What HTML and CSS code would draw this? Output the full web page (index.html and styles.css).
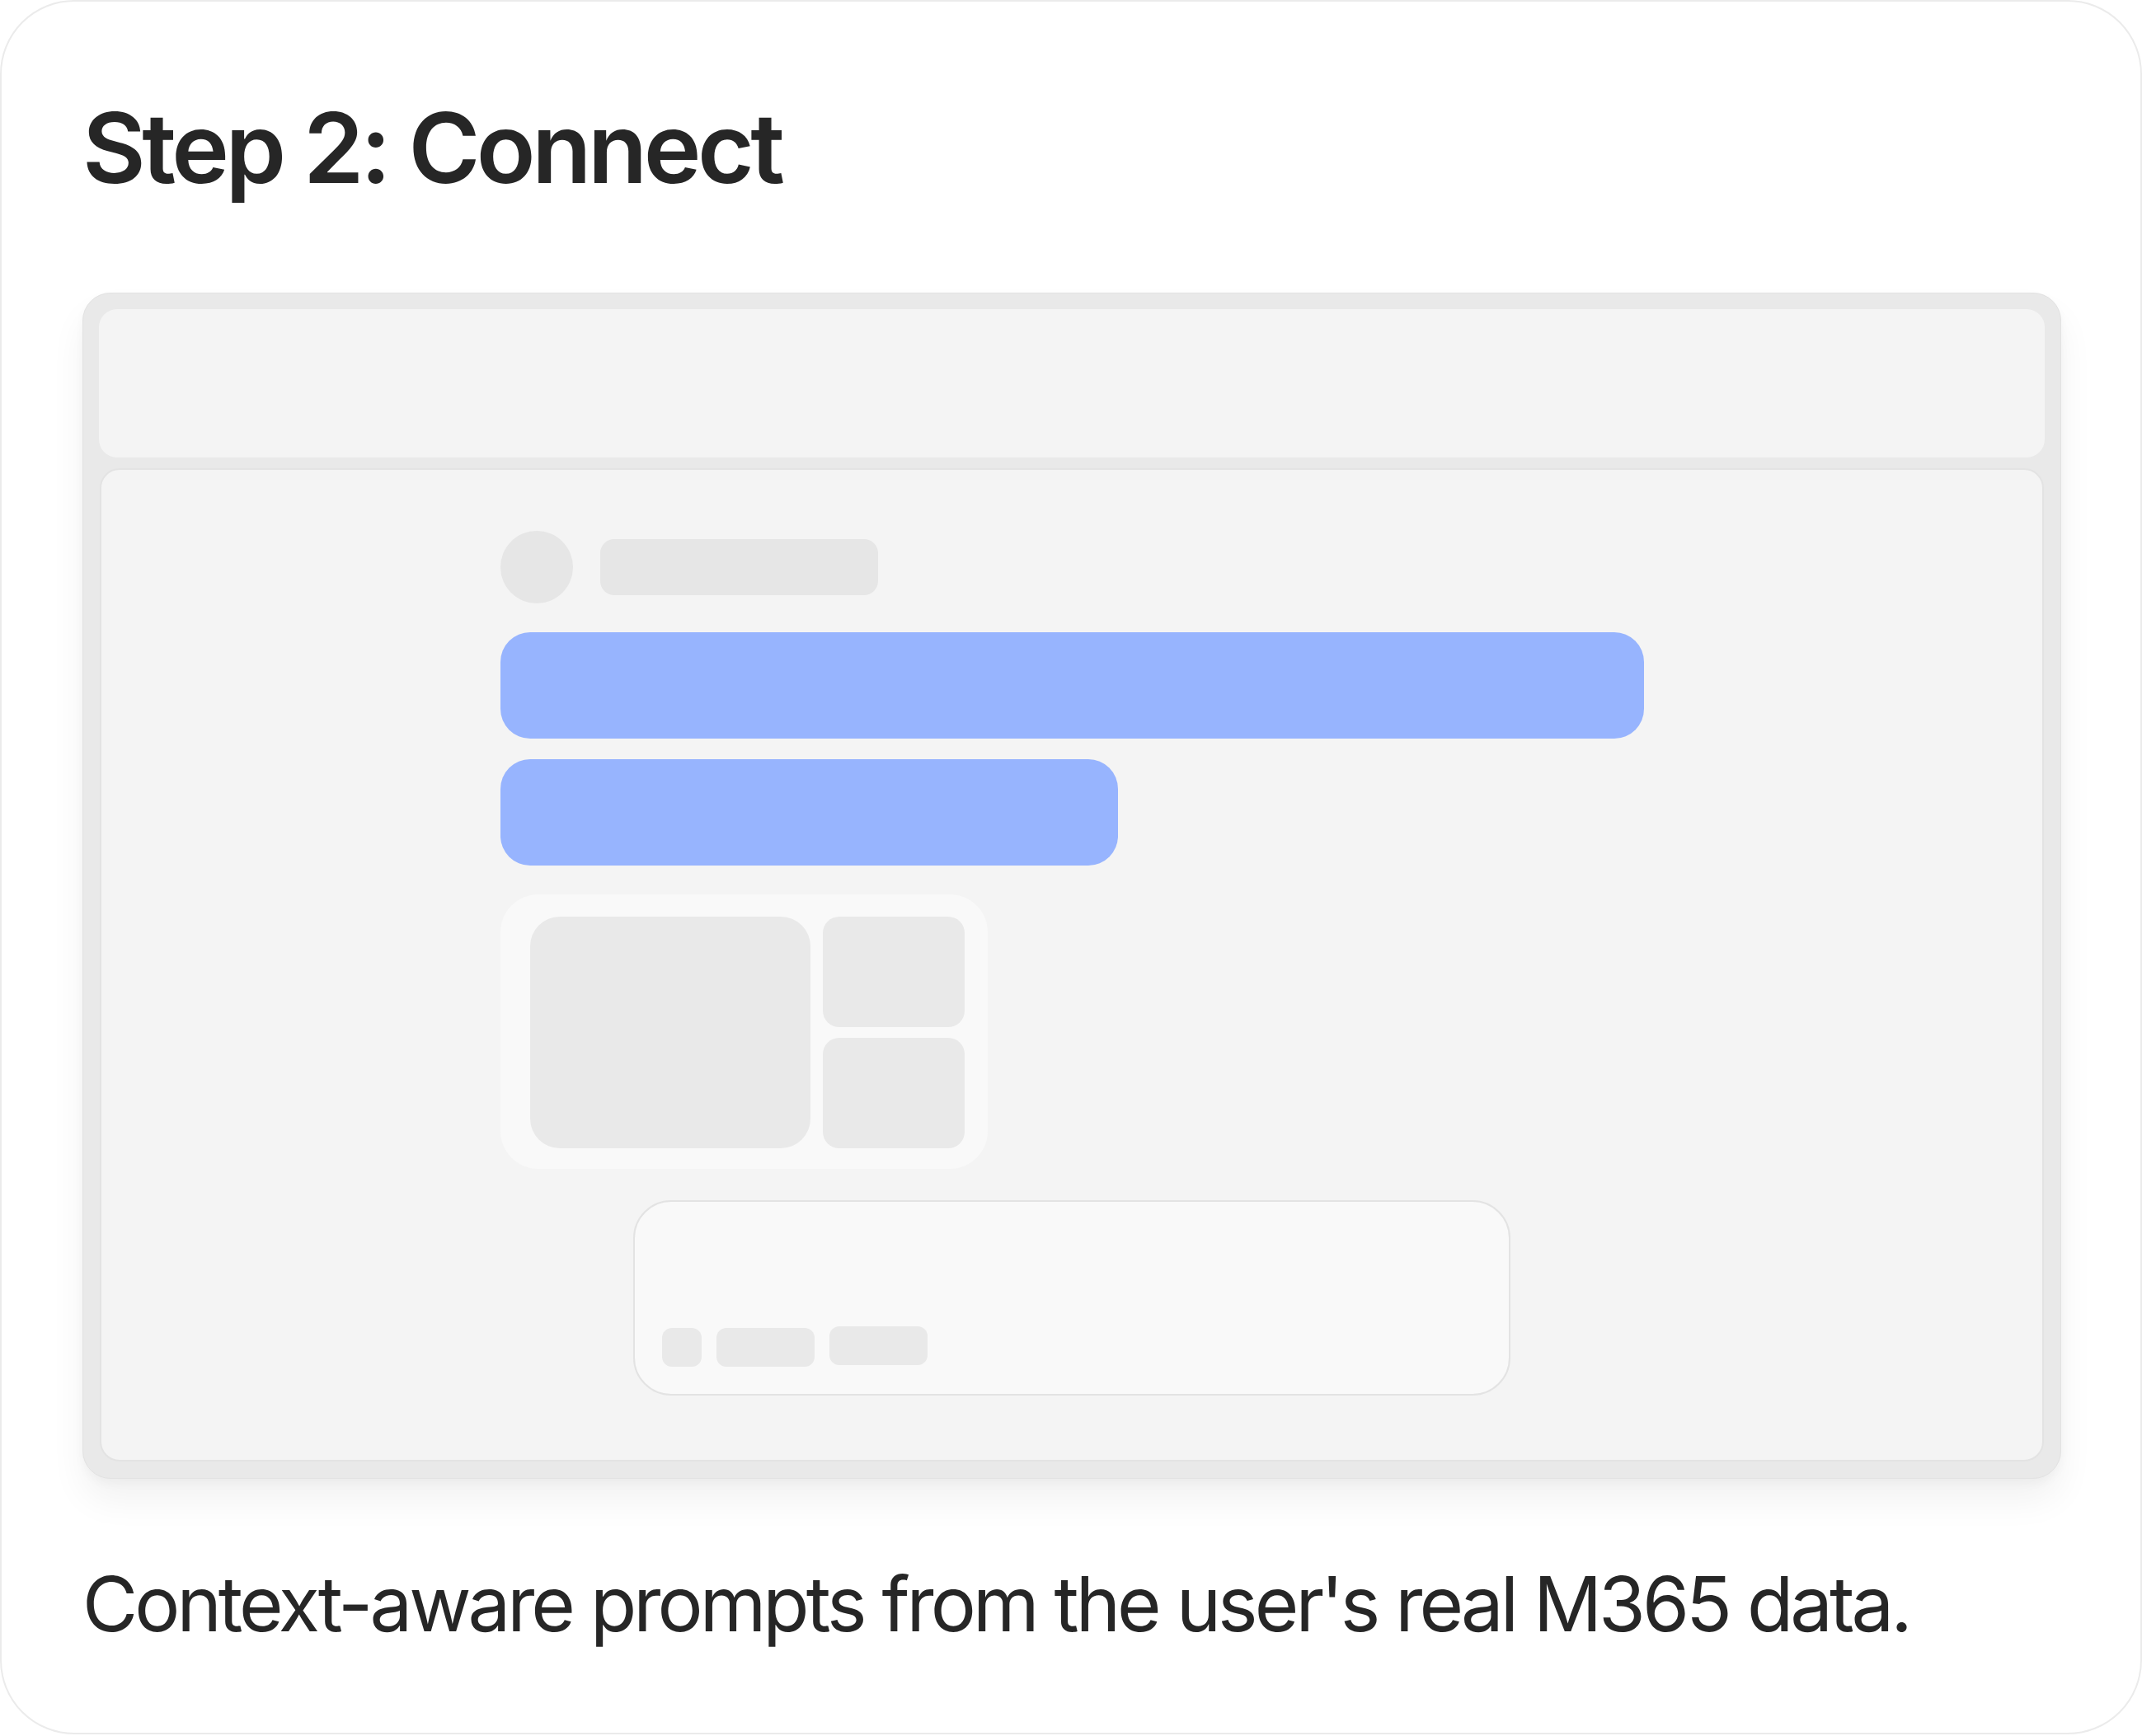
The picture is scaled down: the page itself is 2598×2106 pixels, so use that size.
FILE: index.html
```html
<!DOCTYPE html>
<html lang="en">
<head>
<meta charset="utf-8">
<title>Step 2: Connect</title>
<link rel="stylesheet" href="styles.css">
</head>
<body>
<div class="card">
  <h1 class="title">Step 2: Connect</h1>
  <div class="window">
    <div class="topbar"></div>
    <div class="main">
      <div class="chat">
        <div class="sender">
          <div class="avatar"></div>
          <div class="name"></div>
        </div>
        <div class="bubble bubble-long"></div>
        <div class="bubble bubble-short"></div>
        <div class="gallery">
          <div class="tile tile-big"></div>
          <div class="tile-col">
            <div class="tile tile-small"></div>
            <div class="tile tile-small"></div>
          </div>
        </div>
      </div>
      <div class="composer">
        <div class="chips">
          <div class="chip chip-icon"></div>
          <div class="chip chip-wide"></div>
          <div class="chip chip-wide chip-raised"></div>
        </div>
      </div>
    </div>
  </div>
  <p class="caption">Context-aware prompts from the user's real M365 data.</p>
</div>
</body>
</html>
```

FILE: styles.css
```css
html, body {
  margin: 0;
  padding: 0;
  background: #ffffff;
}

.card {
  box-sizing: border-box;
  width: 2598px;
  height: 2104px;
  border: 2px solid #ebebeb;
  border-radius: 90px;
  background: #ffffff;
  padding: 107px 98px 0 98px;
  font-family: Inter, "Noto Sans", "Liberation Sans", sans-serif;
  color: #262626;
}

.title {
  margin: 0;
  font-size: 118px;
  line-height: 1.2;
  font-weight: 600;
  letter-spacing: -0.038em;
}

.window {
  box-sizing: border-box;
  margin-top: 104px;
  width: 2400px;
  height: 1439px;
  padding: 19px 19px 20px 19px;
  background: #e9e9e9;
  border: 1px solid #e2e2e2;
  border-radius: 34px;
  box-shadow: 0 26px 44px rgba(0, 0, 0, 0.055), 0 6px 12px rgba(0, 0, 0, 0.03);
  display: flex;
  flex-direction: column;
  gap: 13px;
}

.topbar {
  height: 180px;
  background: #f4f4f4;
  border-radius: 22px;
}

.main {
  box-sizing: border-box;
  flex: 1;
  margin: 0 1px;
  background: #f4f4f4;
  border: 2px solid #e3e3e3;
  border-radius: 24px;
  padding-top: 74px;
  display: flex;
  flex-direction: column;
  align-items: center;
}

.chat {
  width: 1387px;
  display: flex;
  flex-direction: column;
  align-items: flex-start;
}

.sender {
  display: flex;
  align-items: center;
  gap: 33px;
}

.avatar {
  width: 88px;
  height: 88px;
  border-radius: 50%;
  background: #e6e6e6;
}

.name {
  width: 337px;
  height: 68px;
  border-radius: 17px;
  background: #e6e6e6;
}

.bubble {
  height: 129px;
  border-radius: 36px;
  background: #97b4fe;
}

.bubble-long {
  width: 1387px;
  margin-top: 35px;
}

.bubble-short {
  width: 749px;
  margin-top: 25px;
}

.gallery {
  box-sizing: border-box;
  margin-top: 35px;
  width: 591px;
  height: 333px;
  padding: 27px 28px 25px 36px;
  background: #f9f9f9;
  border-radius: 46px;
  display: flex;
  gap: 15px;
}

.tile {
  background: #e9e9e9;
}

.tile-big {
  width: 340px;
  border-radius: 36px;
}

.tile-col {
  flex: 1;
  display: flex;
  flex-direction: column;
  gap: 13px;
}

.tile-small {
  flex: 1;
  border-radius: 20px;
}

.composer {
  box-sizing: border-box;
  margin-top: 38px;
  width: 1064px;
  height: 237px;
  background: #f9f9f9;
  border: 2px solid #e3e3e3;
  border-radius: 46px;
  padding: 0 34px 33px 33px;
  display: flex;
  flex-direction: column;
  justify-content: flex-end;
}

.chips {
  display: flex;
  align-items: flex-end;
  gap: 18px;
}

.chip {
  height: 47px;
  border-radius: 12px;
  background: #e9e9e9;
}

.chip-icon {
  width: 48px;
}

.chip-wide {
  width: 119px;
}

.chip-raised {
  margin-bottom: 2px;
}

.caption {
  margin: 97px 0 0 0;
  font-size: 92px;
  line-height: 1.2;
  font-weight: 400;
  letter-spacing: -0.043em;
  color: #262626;
}
```
